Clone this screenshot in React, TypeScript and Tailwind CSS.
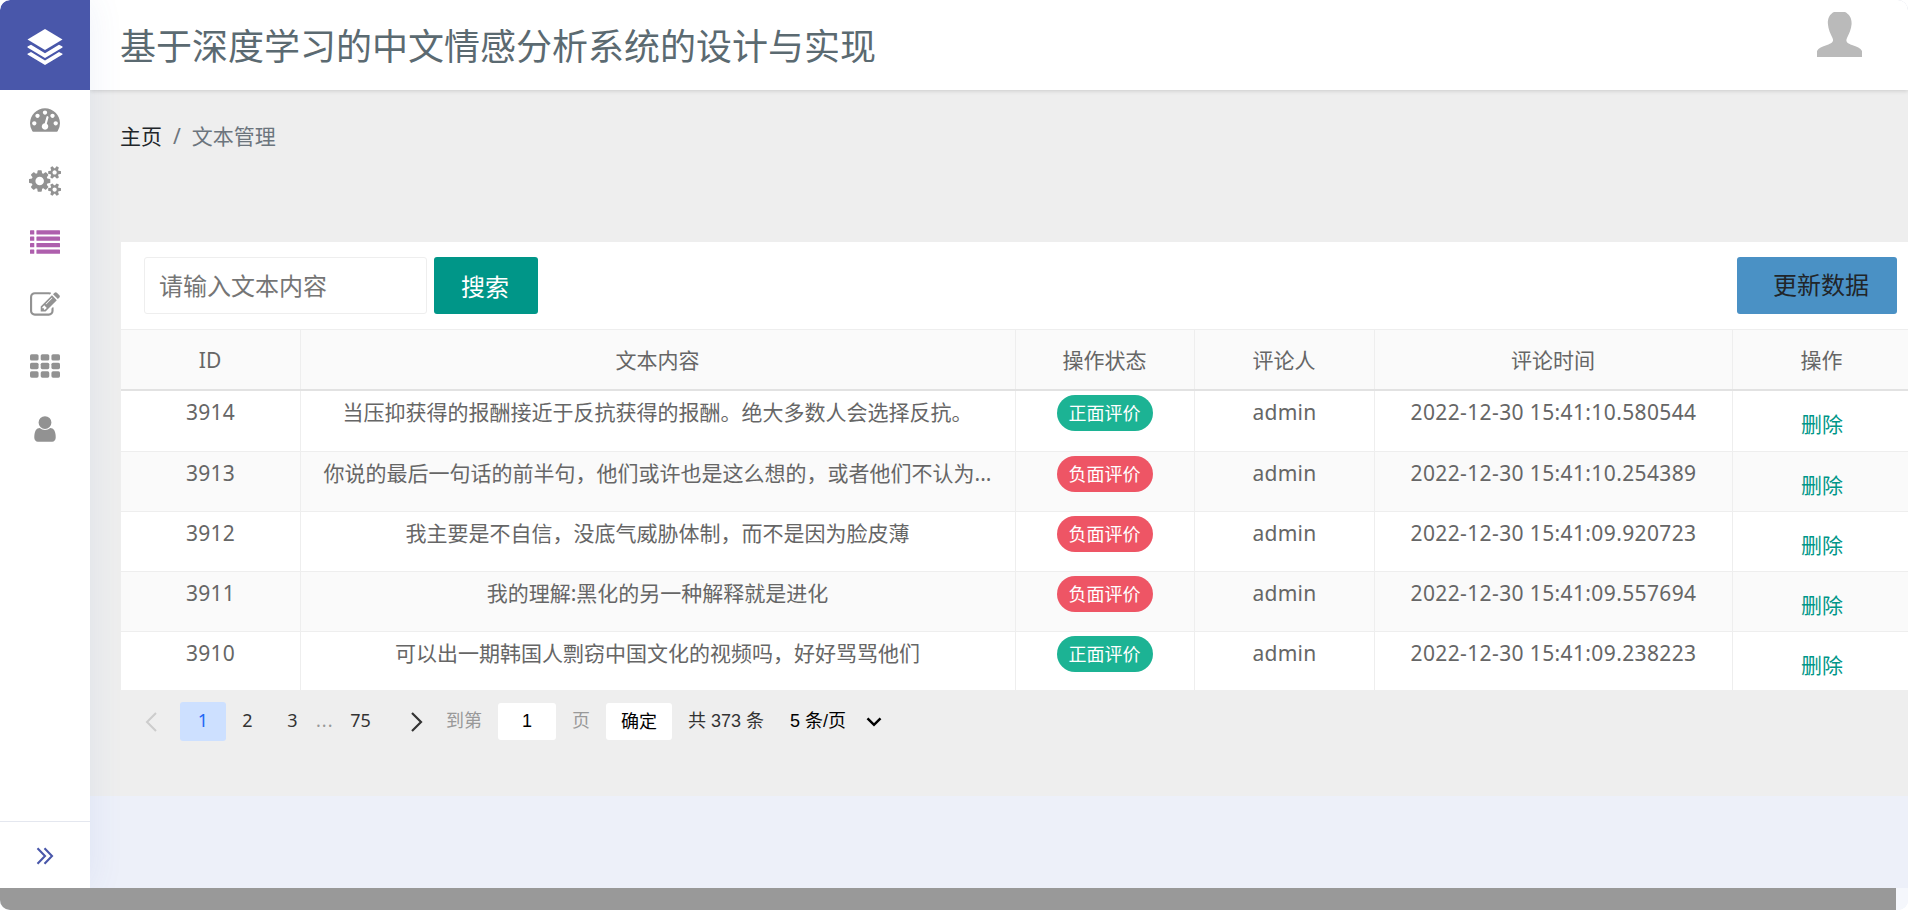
import clsx from 'clsx';

interface Comment {
  id: number;
  text: string;
  positive: boolean;
  author: string;
  time: string;
}

const comments: Comment[] = [
  {
    id: 3914,
    text: '当压抑获得的报酬接近于反抗获得的报酬。绝大多数人会选择反抗。',
    positive: true,
    author: 'admin',
    time: '2022-12-30 15:41:10.580544',
  },
  {
    id: 3913,
    text: '你说的最后一句话的前半句，他们或许也是这么想的，或者他们不认为...',
    positive: false,
    author: 'admin',
    time: '2022-12-30 15:41:10.254389',
  },
  {
    id: 3912,
    text: '我主要是不自信，没底气威胁体制，而不是因为脸皮薄',
    positive: false,
    author: 'admin',
    time: '2022-12-30 15:41:09.920723',
  },
  {
    id: 3911,
    text: '我的理解:黑化的另一种解释就是进化',
    positive: false,
    author: 'admin',
    time: '2022-12-30 15:41:09.557694',
  },
  {
    id: 3910,
    text: '可以出一期韩国人剽窃中国文化的视频吗，好好骂骂他们',
    positive: true,
    author: 'admin',
    time: '2022-12-30 15:41:09.238223',
  },
];

const columns = ['ID', '文本内容', '操作状态', '评论人', '评论时间', '操作'];

const gridColumns = 'grid grid-cols-[180px_715px_179px_180px_358px_177px]';

const dashboardPath =
  'M384 1152q0-53-37.5-90.5t-90.5-37.5-90.5 37.5-37.5 90.5 37.5 90.5 90.5 37.5 90.5-37.5 37.5-90.5zm192-448q0-53-37.5-90.5t-90.5-37.5-90.5 37.5-37.5 90.5 37.5 90.5 90.5 37.5 90.5-37.5 37.5-90.5zm428 481l101-382q6-26-7.5-48.5t-38.5-29.5-48 6.5-30 39.5l-101 382q-60 5-107 43.5t-63 98.5q-20 77 20 146t117 89 146-20 89-117q16-60-6-117t-72-91zm660-33q0-53-37.5-90.5t-90.5-37.5-90.5 37.5-37.5 90.5 37.5 90.5 90.5 37.5 90.5-37.5 37.5-90.5zm-640-640q0-53-37.5-90.5t-90.5-37.5-90.5 37.5-37.5 90.5 37.5 90.5 90.5 37.5 90.5-37.5 37.5-90.5zm448 192q0-53-37.5-90.5t-90.5-37.5-90.5 37.5-37.5 90.5 37.5 90.5 90.5 37.5 90.5-37.5 37.5-90.5zm320 448q0 261-141 483-19 29-54 29h-1402q-35 0-54-29-141-221-141-483 0-182 71-348t191-286 286-191 348-71 348 71 286 191 191 286 71 348z';

const cogsPath =
  'M896 896q0-106-75-181t-181-75-181 75-75 181 75 181 181 75 181-75 75-181zm768 512q0-52-38-90t-90-38-90 38-38 90q0 53 37.5 90.5t90.5 37.5 90.5-37.5 37.5-90.5zm0-1024q0-52-38-90t-90-38-90 38-38 90q0 53 37.5 90.5t90.5 37.5 90.5-37.5 37.5-90.5zm-384 421v185q0 10-7 19.5t-16 10.5l-155 24q-11 35-32 76 34 48 90 115 7 11 7 20 0 12-7 19-23 30-82.5 89.5t-78.5 59.5q-11 0-21-7l-115-90q-37 19-77 31-11 108-23 155-7 24-30 24h-186q-11 0-20-7.5t-10-17.5l-23-153q-34-10-75-31l-118 89q-7 7-20 7-11 0-21-8-144-133-144-160 0-9 7-19 10-14 41-53t47-61q-23-44-35-82l-152-24q-10-1-17-9.5t-7-19.5v-185q0-10 7-19.5t16-10.5l155-24q11-35 32-76-34-48-90-115-7-11-7-20 0-12 7-20 22-30 82-89t79-59q11 0 21 7l115 90q34-18 77-32 11-108 23-154 7-24 30-24h186q11 0 20 7.5t10 17.5l23 153q34 10 75 31l118-89q8-7 20-7 11 0 21 8 144 133 144 160 0 8-7 19-12 16-42 54t-45 60q23 48 34 82l152 23q10 2 17 10.5t7 19.5zm640 533v140q0 16-149 31-12 27-30 52 51 113 51 138 0 4-4 7-122 71-124 71-8 0-46-47t-52-68q-20 2-30 2t-30-2q-14 21-52 68t-46 47q-2 0-124-71-4-3-4-7 0-25 51-138-18-25-30-52-149-15-149-31v-140q0-16 149-31 13-29 30-52-51-113-51-138 0-4 4-7 4-2 35-20t59-34 30-16q8 0 46 46.5t52 67.5q20-2 30-2t30 2q51-71 92-112l6-2q4 0 124 70 4 3 4 7 0 25-51 138 17 23 30 52 149 15 149 31zm0-1024v140q0 16-149 31-12 27-30 52 51 113 51 138 0 4-4 7-122 71-124 71-8 0-46-47t-52-68q-20 2-30 2t-30-2q-14 21-52 68t-46 47q-2 0-124-71-4-3-4-7 0-25 51-138-18-25-30-52-149-15-149-31v-140q0-16 149-31 13-29 30-52-51-113-51-138 0-4 4-7 4-2 35-20t59-34 30-16q8 0 46 46.5t52 67.5q20-2 30-2t30 2q51-71 92-112l6-2q4 0 124 70 4 3 4 7 0 25-51 138 17 23 30 52 149 15 149 31z';

const editPath =
  'M888 1184l116-116-152-152-116 116v56h96v96h56zm440-720q-16-16-33 1l-350 350q-17 17-1 33t33-1l350-350q17-17 1-33zm80 594v190q0 119-84.5 203.5t-203.5 84.5h-832q-119 0-203.5-84.5t-84.5-203.5v-832q0-119 84.5-203.5t203.5-84.5h832q63 0 117 25 15 7 18 23 3 17-9 29l-49 49q-14 14-32 8-23-6-45-6h-832q-66 0-113 47t-47 113v832q0 66 47 113t113 47h832q66 0 113-47t47-113v-126q0-13 9-22l64-64q15-15 35-7t20 29zm-96-738l288 288-672 672h-288v-288zm444 132l-92 92-288-288 92-92q28-28 68-28t68 28l152 152q28 28 28 68t-28 68z';

const userPath =
  'M1536 1399q0 109-62.5 187t-150.5 78h-854q-88 0-150.5-78t-62.5-187q0-85 8.5-160.5t31.5-152 58.5-131 94-89 134.5-34.5q131 128 313 128t313-128q76 0 134.5 34.5t94 89 58.5 131 31.5 152 8.5 160.5zm-256-887q0 159-112.5 271.5t-271.5 112.5-271.5-112.5-112.5-271.5 112.5-271.5 271.5-112.5 271.5 112.5 112.5 271.5z';

const Sidebar = () => (
  <aside className="z-10 flex w-[90px] shrink-0 flex-col bg-white shadow-[0_0_36px_rgba(70,100,190,0.09)]">
    <div className="flex h-[90px] items-center justify-center rounded-tl-[10px] bg-[#4957aa]">
      <svg viewBox="0 0 36 36" className="mt-1 h-9 w-9" fill="#fff">
        <path d="M18 0 35.5 10.5 18 21 .5 10.500Z" />
        <path d="M.5 17.500 4 15.700 18 24.200l14-8.500 3.500 1.800v.9L18 28.900.5 18.400Z" />
        <path d="M.5 24.700 4 22.900 18 31.400l14-8.500 3.500 1.800v.9L18 36 .5 25.600Z" />
      </svg>
    </div>
    <nav className="flex flex-1 flex-col items-center pt-3.5 text-[#929292]">
      <svg viewBox="0 0 1792 1792" className="h-[30px] w-[30px]" fill="currentColor">
        <path d={dashboardPath} />
      </svg>
      <svg viewBox="0 0 1920 1792" className="mt-8 h-[30px] w-8" fill="currentColor">
        <path d={cogsPath} />
      </svg>
      <svg viewBox="0 0 1792 1792" className="mt-8 h-[30px] w-[30px] text-[#ae5fad]" fill="currentColor">
        {[128, 512, 896, 1280].map((y) => (
          <g key={y}>
            <rect x="0" y={y} width="256" height="256" rx="32" />
            <rect x="384" y={y} width="1408" height="256" rx="32" />
          </g>
        ))}
      </svg>
      <svg viewBox="0 0 1792 1792" className="mt-8 h-[30px] w-[30px]" fill="currentColor">
        <path d={editPath} />
      </svg>
      <svg viewBox="0 0 1792 1792" className="mt-8 h-[30px] w-[30px]" fill="currentColor">
        {[128, 640, 1152].map((y) =>
          [0, 640, 1280].map((x) => <rect key={`${x}-${y}`} x={x} y={y} width="512" height="384" rx="96" />)
        )}
      </svg>
      <svg viewBox="0 0 1792 1792" className="mt-8 h-[30px] w-[30px]" fill="currentColor">
        <path d={userPath} />
      </svg>
    </nav>
    <div className="flex h-[67px] items-center justify-center border-t border-[#e4e7ef]">
      <svg viewBox="0 0 18 18" className="mt-0.5 h-[18px] w-[18px]" fill="none" stroke="#4957aa" strokeWidth="2.1">
        <path d="M1.5 1.3 9 9 1.5 16.7M8.5 1.3 16 9l-7.5 7.7" />
      </svg>
    </div>
  </aside>
);

const Header = () => (
  <header className="relative flex h-[90px] shrink-0 items-start justify-between rounded-tr-[10px] bg-white pr-[46px] pl-[30px] shadow-[0_1px_4px_rgba(0,0,0,0.15)]">
    <h1 className="pt-5 text-[36px] leading-[54px] text-[#5b6a71]">基于深度学习的中文情感分析系统的设计与实现</h1>
    <svg viewBox="0 0 45 45" className="mt-3 h-[45px] w-[45px]" fill="#bababa">
      <path d="M17 0h11c4 2 7 6 6.600 12-.3 5-2.600 10-4.600 14-2 4 1 5.500 5 7 5 1.600 8.500 3 10 6v6H0v-6c1.500-3 5-4.400 10-6 4-1.500 7.500-3 5.500-7-2-4-4.300-9-4.600-14C10.500 6 13 2 17 0Z" />
    </svg>
  </header>
);

const Toolbar = () => (
  <div className="flex h-[87px] items-center bg-white pr-[11px] pl-[23px] text-2xl">
    <input
      className="h-[57px] w-[283px] rounded-[3px] border border-[#eee] pl-3.5 placeholder:text-[#757575]"
      placeholder="请输入文本内容"
    />
    <button className="ml-[7px] h-[57px] w-[104px] rounded-[3px] bg-[#009688] pt-0.5 pr-0.5 text-white">搜索</button>
    <button className="ml-auto h-[57px] w-40 rounded-[3px] bg-[#4a91c5] pb-0.5 pl-2 text-[#212529]">更新数据</button>
  </div>
);

const CommentTable = () => (
  <div className="border-t border-[#eee] text-[21px] text-[#666]">
    <div className={clsx(gridColumns, 'h-[61px] border-b-2 border-[#e2e2e2] bg-[#fafafa]')}>
      {columns.map((column) => (
        <div
          key={column}
          className="flex items-center justify-center border-r border-[#eee] pt-0.5 pr-px last:border-r-0 last:pr-0"
        >
          {column}
        </div>
      ))}
    </div>
    {comments.map((comment, i) => (
      <div
        key={comment.id}
        className={clsx(
          gridColumns,
          'border-[#eee] text-center leading-[42px]',
          i === 0 ? 'h-[61px]' : i === comments.length - 1 ? 'h-[58px]' : 'h-[60px]',
          i < comments.length - 1 && 'border-b',
          i % 2 ? 'bg-[#fafafa]' : 'bg-white'
        )}
      >
        <div className="border-r border-[#eee] tracking-[0.3px]">{comment.id}</div>
        <div className="overflow-hidden border-r border-[#eee] pr-px whitespace-nowrap">{comment.text}</div>
        <div className="flex items-start justify-center border-r border-[#eee] pt-1">
          <span
            className={clsx(
              'h-9 w-24 rounded-full pr-px text-lg leading-[37px] text-white',
              comment.positive ? 'bg-[#1cb394]' : 'bg-[#ee5565]'
            )}
          >
            {comment.positive ? '正面评价' : '负面评价'}
          </span>
        </div>
        <div className="border-r border-[#eee] tracking-[0.3px]">{comment.author}</div>
        <div className="border-r border-[#eee] tracking-[0.38px]">{comment.time}</div>
        <a className="pt-3 pl-px text-[#009688]">删除</a>
      </div>
    ))}
  </div>
);

const Pagination = () => (
  <div className="flex h-[63px] items-center pl-6 text-lg text-[#333]">
    <svg viewBox="0 0 12 20" className="h-5 w-3" fill="none" stroke="#ccc" strokeWidth="2">
      <path d="M11 1 2 10l9 9" />
    </svg>
    <span className="ml-[23px] h-[39px] w-[46px] rounded-[3px] bg-[#cde0ff] text-center leading-[37px] text-[#1e67f5]">
      1
    </span>
    <span className="w-[43px] pb-1 text-center">2</span>
    <span className="w-[47px] pb-1 text-center">3</span>
    <span className="w-4 pb-1 text-center tracking-[1px] text-[#999]">...</span>
    <span className="w-[57px] pb-1 text-center">75</span>
    <svg viewBox="0 0 12 20" className="ml-[22px] h-5 w-3" fill="none" stroke="#333" strokeWidth="2.2">
      <path d="m1 1 9 9-9 9" />
    </svg>
    <span className="ml-[23px] pb-1 text-[#999]">到第</span>
    <span className="ml-4 h-[37px] w-[58px] rounded-[3px] bg-white text-center font-['Liberation_Sans'] leading-[37px] text-black">
      1
    </span>
    <span className="ml-4 pb-1 text-[#999]">页</span>
    <button className="ml-4 h-[37px] w-[66px] rounded-[3px] bg-white pb-0.5 text-black">确定</button>
    <span className="ml-4 pb-0.5 font-['Liberation_Sans','Noto_Sans_CJK_SC',sans-serif]">共 373 条</span>
    <span className="ml-[26px] pb-0.5 font-['Liberation_Sans','Noto_Sans_CJK_SC',sans-serif] text-black">5 条/页</span>
    <svg viewBox="0 0 16 10" className="ml-5 h-2.5 w-4" fill="none" stroke="#000" strokeWidth="2.5">
      <path d="m1.500 1.300 6.500 6.500 6.500-6.500" />
    </svg>
  </div>
);

const App = () => (
  <div className="flex h-[910px] w-[1908px] flex-col overflow-hidden rounded-[10px] bg-[#edf0f9] font-['Noto_Sans','Noto_Sans_CJK_SC',sans-serif]">
    <div className="flex h-[888px] overflow-hidden">
      <Sidebar />
      <div className="flex min-w-0 flex-1 flex-col">
        <Header />
        <main className="h-[706px] overflow-hidden bg-[#eee] pl-[31px]">
          <nav className="-ml-px flex h-[152px] pt-[30px] text-[21px] leading-8 text-[#6c757d]">
            <span className="text-[#212529]">主页</span>
            <span className="px-[11px]">/</span>
            <span>文本管理</span>
          </nav>
          <Toolbar />
          <CommentTable />
          <Pagination />
        </main>
      </div>
    </div>
    {/* horizontal scrollbar */}
    <div className="h-[22px] bg-[#f5f7fc]">
      <div className="h-full w-[1896px] bg-[#999]" />
    </div>
  </div>
);

export default App;
